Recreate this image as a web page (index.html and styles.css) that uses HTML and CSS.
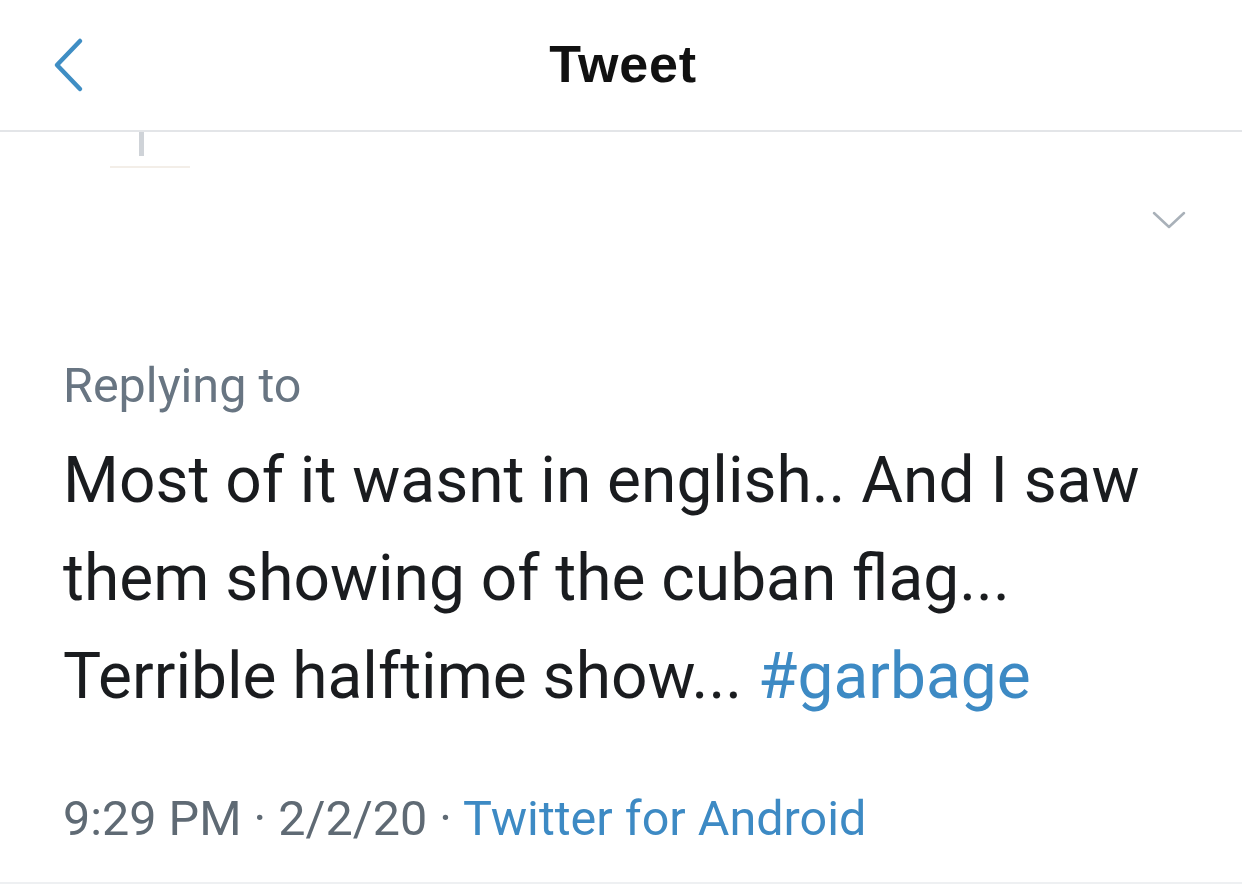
FILE: index.html
```html
<!DOCTYPE html>
<html lang="en">
<head>
<meta charset="utf-8">
<title>Tweet</title>
<link rel="stylesheet" href="styles.css">
</head>
<body>
<div class="screen">
  <header class="topbar">
    <button class="back" aria-label="Back">
      <svg width="40" height="60" viewBox="0 0 40 60"><path d="M30 7 L7 31 L30 55" fill="none" stroke="#3f8ec4" stroke-width="4.5" stroke-linecap="round" stroke-linejoin="round"/></svg>
    </button>
    <h1 class="title">Tweet</h1>
  </header>
  <div class="thread">
    <span class="thread-line"></span>
    <span class="avatar-edge"></span>
  </div>
  <div class="tweet-head">
    <svg class="caret" width="40" height="24" viewBox="0 0 40 24"><path d="M5 5 L20 19 L35 5" fill="none" stroke="#a9b1b9" stroke-width="2.5" stroke-linecap="round" stroke-linejoin="round"/></svg>
  </div>
  <main class="tweet">
    <p class="replying">Replying to</p>
    <p class="body">Most of it wasnt in english.. And I saw them showing of the cuban flag... Terrible halftime show... <span class="link">#garbage</span></p>
    <p class="meta">9:29 PM · 2/2/20 · <span class="link">Twitter for Android</span></p>
  </main>
</div>
</body>
</html>
```
FILE: styles.css
```css
* { box-sizing: border-box; }
html, body { margin: 0; padding: 0; background: #ffffff; }
body {
  font-family: Roboto, "Liberation Sans", sans-serif;
  color: #14171a;
  width: 1242px;
  height: 884px;
  overflow: hidden;
}
.screen {
  display: flex;
  flex-direction: column;
  height: 884px;
}
.topbar {
  height: 132px;
  border-bottom: 2px solid #e3e5e8;
  display: flex;
  align-items: center;
  padding: 0 0 2px 50px;
}
.back {
  background: none;
  border: 0;
  padding: 0;
  width: 40px;
  height: 60px;
  display: flex;
}
.title {
  margin: 0;
  flex: 1;
  text-align: center;
  font-family: "Liberation Sans", Arial, sans-serif;
  font-weight: 700;
  font-size: 52px;
  letter-spacing: 0.8px;
  color: #111;
  padding-right: 86px;
}
.thread {
  height: 40px;
  position: relative;
}
.thread-line {
  position: absolute;
  left: 139px;
  top: 0;
  width: 5px;
  height: 24px;
  background: #cfd3d8;
}
.avatar-edge {
  position: absolute;
  left: 110px;
  top: 34px;
  width: 80px;
  height: 2px;
  background: #f3eee8;
}
.tweet-head {
  display: flex;
  justify-content: flex-end;
  padding-right: 53px;
  height: 185px;
  padding-top: 36px;
}
.caret { display: block; }
.tweet {
  padding-left: 63px;
  border-bottom: 2px solid #eef0f2;
  flex: 1;
}
.replying {
  margin: 0;
  font-size: 48.5px;
  color: #687582;
  line-height: 58px;
}
.body {
  margin: 17px 0 0;
  font-size: 64px;
  line-height: 98px;
  color: #1a1c1f;
  width: 1150px;
}
.link { color: #3d8ac4; }
.meta {
  margin: 64px 0 0;
  font-size: 48.5px;
  line-height: 58px;
  color: #5f6a74;
}
```
